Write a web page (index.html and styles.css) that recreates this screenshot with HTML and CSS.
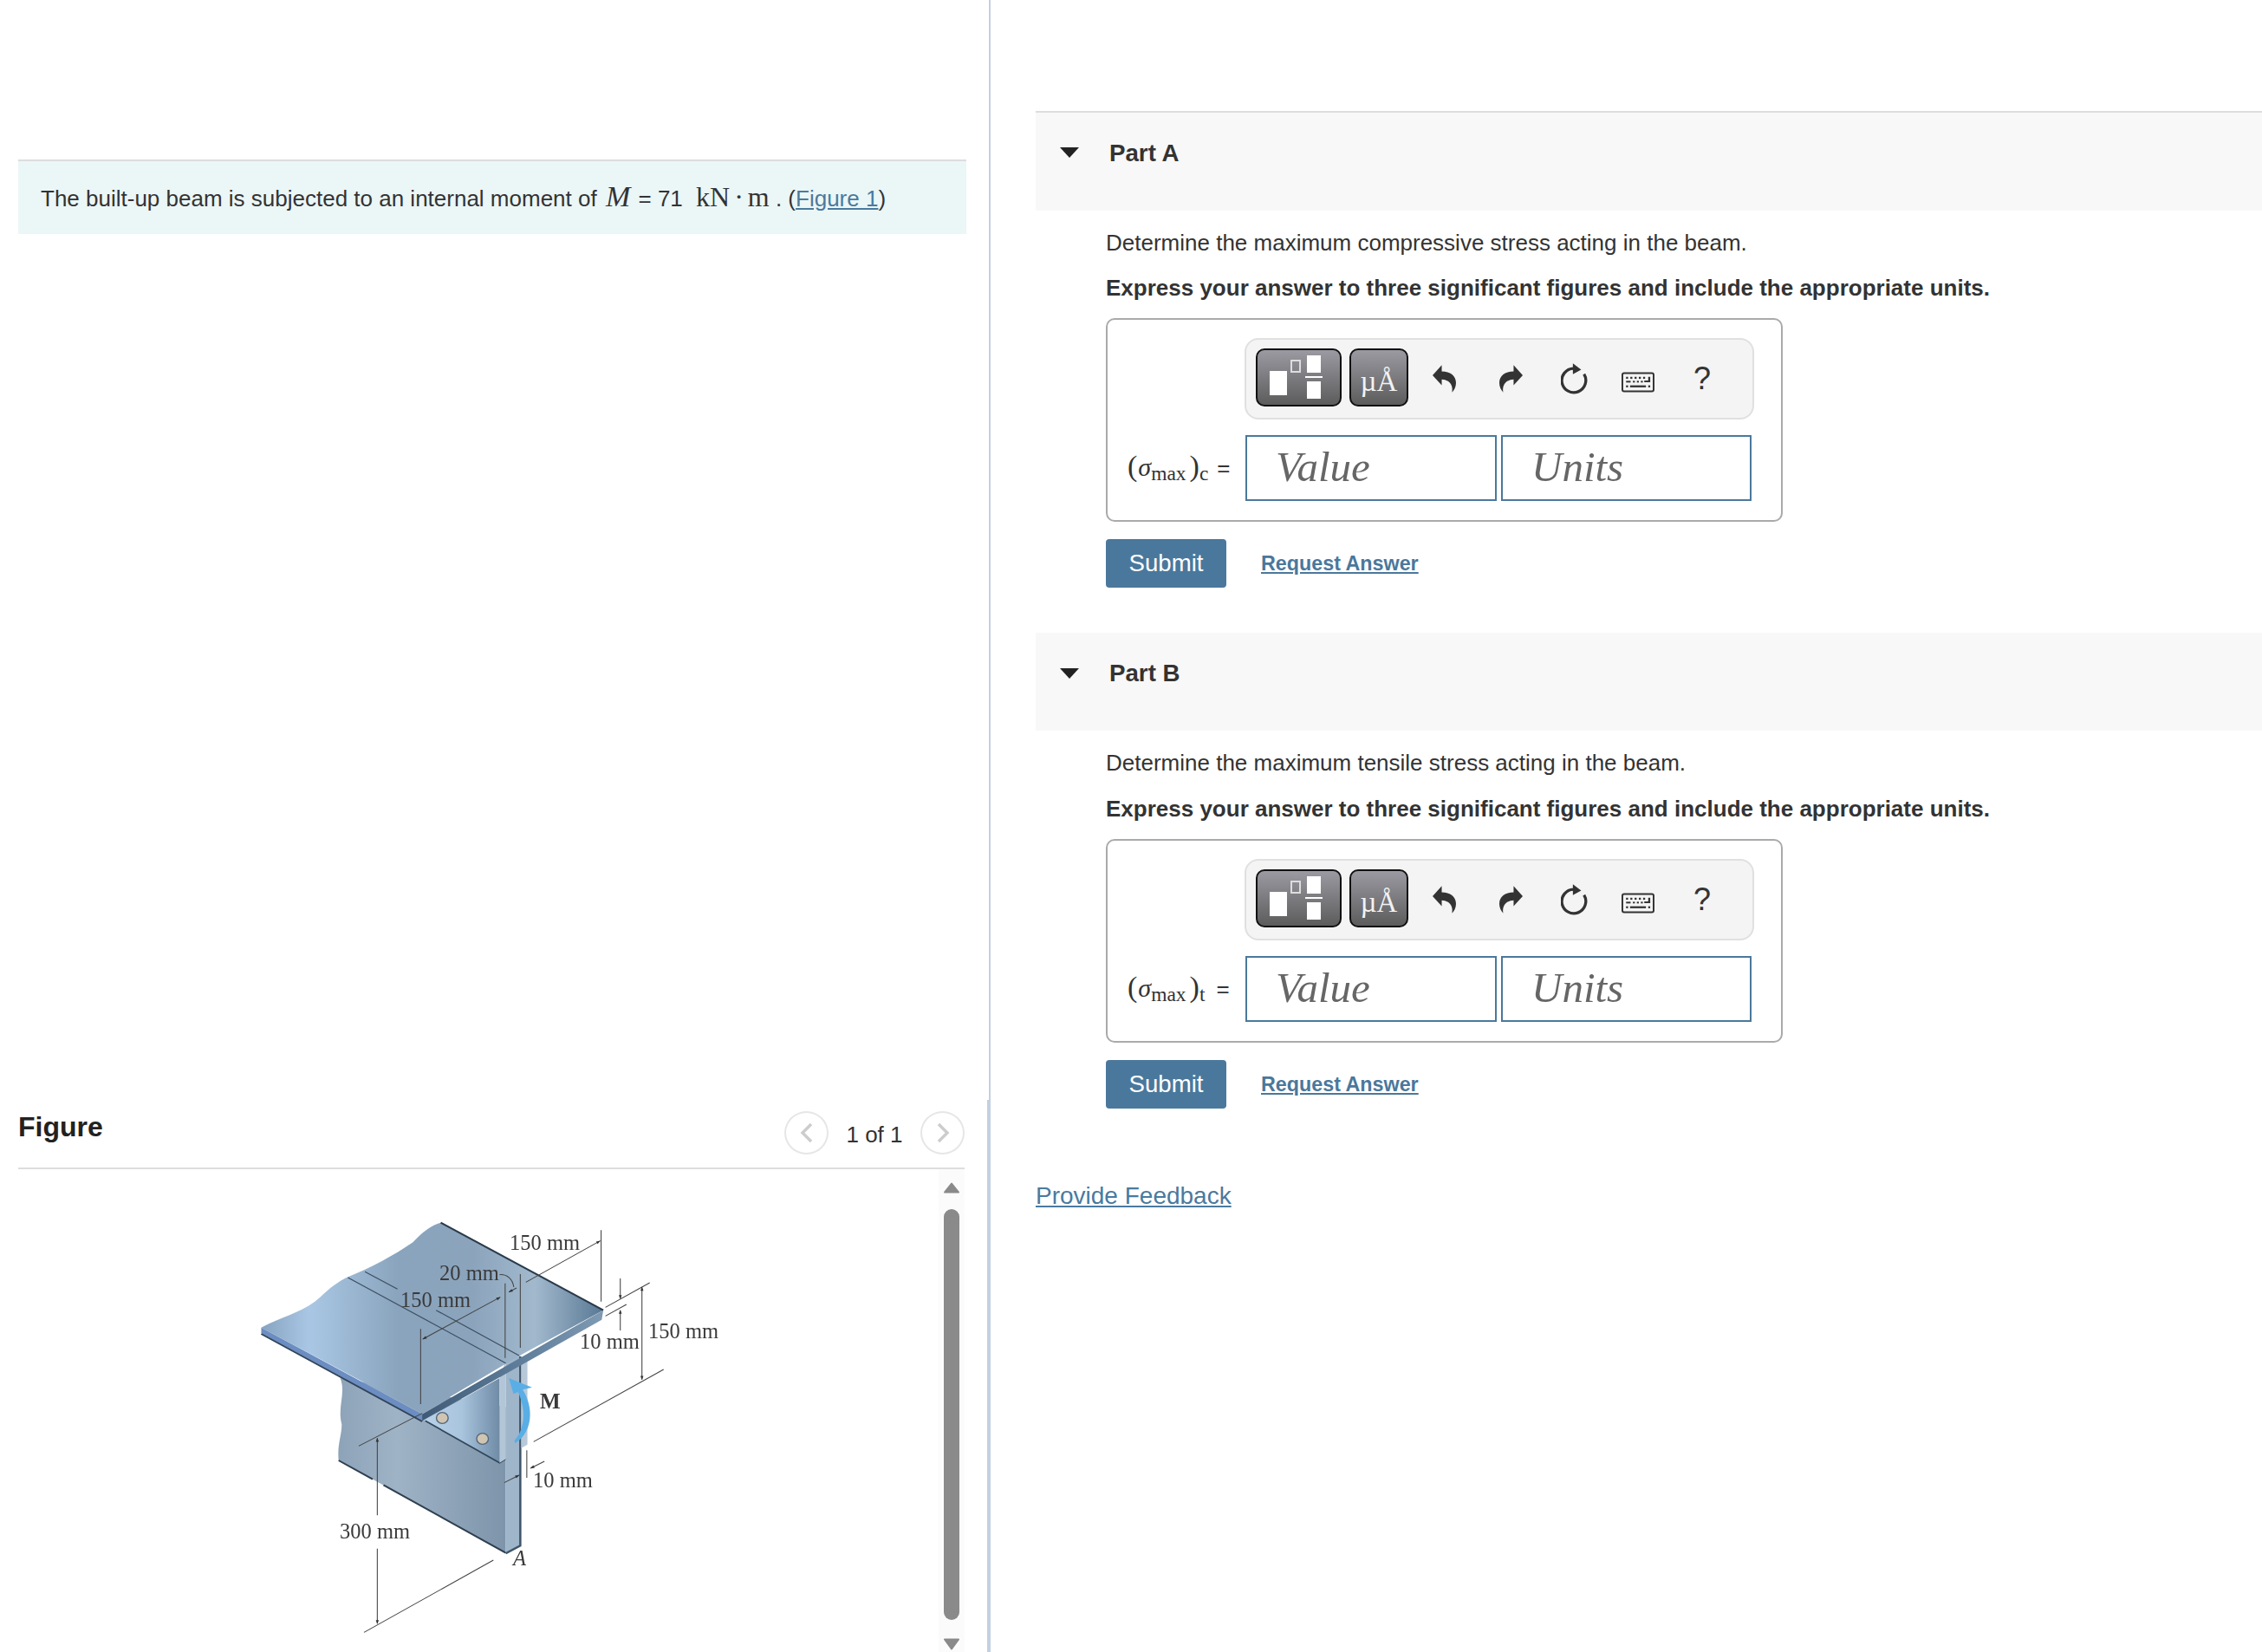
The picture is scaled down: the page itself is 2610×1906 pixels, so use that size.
FILE: index.html
```html
<!DOCTYPE html>
<html lang="en">
<head>
<meta charset="utf-8">
<title>Built-up beam</title>
<link rel="stylesheet" href="styles.css">
</head>
<body>
<svg class="defs" width="0" height="0" aria-hidden="true">
  <defs>
    <g id="i-undo"><path d="M0 35 L32 0 V22 C62 22 82 38 82 62 C82 76 76 88 68 95 C72 78 66 52 32 50 V70 Z"/></g>
    <g id="i-reload">
      <path d="M81 38 A42 42 0 1 1 44 18" fill="none" stroke="#333" stroke-width="10"/>
      <path d="M42 0 L71 22 L42 38 Z"/>
    </g>
    <g id="i-keyboard">
      <rect x="3" y="3" width="110" height="64" rx="6" fill="none" stroke="#333" stroke-width="6"/>
      <rect x="16" y="16" width="7" height="7"/><rect x="31" y="16" width="7" height="7"/><rect x="46" y="16" width="7" height="7"/><rect x="61" y="16" width="7" height="7"/><rect x="76" y="16" width="7" height="7"/><rect x="94" y="16" width="7" height="18"/>
      <rect x="16" y="30" width="16" height="6"/><rect x="40" y="30" width="7" height="6"/><rect x="54" y="30" width="7" height="6"/><rect x="68" y="30" width="7" height="6"/><rect x="80" y="29" width="21" height="6"/>
      <rect x="16" y="46" width="7" height="7"/><rect x="30" y="46" width="56" height="7"/><rect x="94" y="46" width="7" height="7"/>
    </g>
    <g id="i-template">
      <rect x="16" y="26" width="20" height="28" fill="#fff"/>
      <rect x="41" y="14" width="10" height="13" fill="none" stroke="#ddd" stroke-width="2"/>
      <rect x="59" y="8" width="16" height="20" fill="#fff"/>
      <rect x="57" y="32" width="20" height="2" fill="#fff"/>
      <rect x="59" y="38" width="16" height="20" fill="#fff"/>
    </g>
  </defs>
</svg>

<div class="page">
  <section class="left">
    <p class="prompt">The built-up beam is subjected to an internal moment of <i class="mi">M</i> = 71 <span class="mu">kN<span class="dot">·</span>m</span> . (<a class="link" href="#fig">Figure 1</a>)</p>

    <div class="figure" id="fig">
      <header class="fig-head">
        <h2 class="fig-title">Figure</h2>
        <div class="pager">
          <span class="circle"><svg width="16" height="24" viewBox="0 0 16 24"><path d="M13 2 L3 12 L13 22" fill="none" stroke="#ccc" stroke-width="3.4"/></svg></span>
          <span class="count">1 of 1</span>
          <span class="circle"><svg width="16" height="24" viewBox="0 0 16 24"><path d="M3 2 L13 12 L3 22" fill="none" stroke="#ccc" stroke-width="3.4"/></svg></span>
        </div>
      </header>
      <div class="fig-body">
        <div class="fig-view">
          <svg class="beam" width="560" height="516" viewBox="0 0 560 516">
            <defs>
              <linearGradient id="gTop" x1="0" x2="1" y1="0" y2="0">
                <stop offset="0" stop-color="#86a3c0"/><stop offset=".14" stop-color="#a9c7e4"/><stop offset=".4" stop-color="#8aa4bd"/><stop offset=".62" stop-color="#8ba4bc"/><stop offset=".8" stop-color="#a2b9cd"/><stop offset="1" stop-color="#587894"/>
              </linearGradient>
              <linearGradient id="gWeb" x1="0" x2="1" y1="0" y2="0">
                <stop offset="0" stop-color="#8da3b8"/><stop offset=".35" stop-color="#9fb3c6"/><stop offset="1" stop-color="#7d94aa"/>
              </linearGradient>
              <linearGradient id="gPlate" x1="0" x2="1" y1="0" y2="0">
                <stop offset="0" stop-color="#b9d2ea"/><stop offset=".5" stop-color="#a9c4dd"/><stop offset="1" stop-color="#6f8ba6"/>
              </linearGradient>
              <linearGradient id="gEdge" x1="0" x2="1" y1="0" y2="0">
                <stop offset="0" stop-color="#3f5a76"/><stop offset=".5" stop-color="#5c7b98"/><stop offset="1" stop-color="#7f9ab2"/>
              </linearGradient>
              <marker id="ah" viewBox="0 0 10 10" refX="9" refY="5" markerWidth="18" markerHeight="14" orient="auto-start-reverse" markerUnits="userSpaceOnUse"><path d="M0 1.5 L10 5 L0 8.500 Z" fill="#333"/></marker>
            </defs>
            <g transform="scale(.35714 .33333)">
              <path d="M315 600 C335 650 305 700 320 760 C320 800 305 830 310 885 L850 1205 L850 700 Z" fill="url(#gWeb)"/>
              <path d="M310 885 L420 950 M455 970 L850 1205" stroke="#2f3f50" stroke-width="6" fill="none"/>
              <path d="M585 745 L830 600 L830 895 Z" fill="url(#gPlate)"/>
              <path d="M590 748 L830 893 L850 880" stroke="#33475a" stroke-width="5" fill="none"/>
              <path d="M830 600 L850 540 L850 880 L830 893 Z" fill="#b3c6d8"/>
              <path d="M850 540 L897 520 L897 1180 L850 1205 Z" fill="#9fb5ca"/>
              <path d="M897 525 V1180 L850 1207" stroke="#3f5468" stroke-width="7" fill="none"/>
              <path d="M900 530 L920 530 L920 830 L900 842 Z" fill="#b7c9d8"/>
              <circle cx="645" cy="738" r="19" fill="#cfc5b2" stroke="#54687c" stroke-width="4"/>
              <circle cx="775" cy="810" r="19" fill="#cfc5b2" stroke="#54687c" stroke-width="4"/>
              <path d="M60 425 C130 385 200 370 250 320 C280 290 310 265 340 250 C410 220 490 175 550 130 C580 95 610 70 640 62 L1165 365 L890 525 L580 722 Z" fill="url(#gTop)"/>
              <path d="M60 425 L580 725 L580 748 L60 445 Z" fill="#6b8dc2"/>
              <path d="M60 447 L580 750" stroke="#2f4358" stroke-width="6"/>
              <path d="M580 725 L1165 365 L1160 398 L580 748 Z" fill="url(#gEdge)"/>
              <path d="M640 62 L1165 365" stroke="#2a3a4a" stroke-width="6"/>
              <path d="M340 252 L850 548 M395 232 L500 292 M625 365 L893 522" stroke="#3d4f62" stroke-width="3.500" fill="none"/>
              <g stroke="#444" stroke-width="3" fill="none">
                <path d="M1158 88 V335"/>
                <path d="M582 465 L832 320" marker-start="url(#ah)" marker-end="url(#ah)"/>
                <path d="M860 302 L885 288" marker-start="url(#ah)"/>
                <path d="M915 268 L1155 125" marker-end="url(#ah)"/>
                <path d="M575 430 V690"/>
                <path d="M848 272 V530"/>
                <path d="M897 240 V495"/>
                <path d="M830 242 C855 240 872 258 876 285"/>
                <path d="M1172 355 L1315 270 M1172 385 L1240 345"/>
                <path d="M1220 255 V325" marker-end="url(#ah)"/>
                <path d="M1220 435 V365" marker-end="url(#ah)"/>
                <path d="M1290 285 V605" marker-start="url(#ah)" marker-end="url(#ah)"/>
                <path d="M940 820 L1360 570"/>
                <path d="M375 835 L580 722"/>
                <path d="M435 1075 V808" marker-end="url(#ah)"/>
                <path d="M435 1190 V1450" marker-end="url(#ah)"/>
                <path d="M392 1480 L810 1230"/>
                <path d="M918 850 V945"/>
                <path d="M975 888 L930 912" marker-end="url(#ah)"/>
                <path d="M845 962 L893 936" marker-end="url(#ah)"/>
              </g>
              <path d="M880 825 C925 800 950 720 905 640 L935 632 L860 600 L875 655 L890 648 C920 720 905 790 878 815 Z" fill="#5aaee6"/>
            </g>
            <g class="dim">
              <text x="308" y="52">150 mm</text>
              <text x="227" y="87">20 mm</text>
              <text x="182" y="118">150 mm</text>
              <text x="389" y="166">10 mm</text>
              <text x="468" y="154">150 mm</text>
              <text class="dim-m" x="343" y="235">M</text>
              <text x="335" y="326">10 mm</text>
              <text x="112" y="385">300 mm</text>
              <text class="dim-a" x="312" y="416">A</text>
            </g>
          </svg>
        </div>
        <div class="scroll">
          <svg class="arrow" width="18" height="13" viewBox="0 0 18 13"><path d="M9 1.500 L17 11.500 H1 Z" fill="#8a8a8a" stroke="#8a8a8a" stroke-width="2" stroke-linejoin="round"/></svg>
          <div class="thumb"></div>
          <svg class="arrow" width="18" height="14" viewBox="0 0 18 14"><path d="M1 1.500 H17 L9 12.500 Z" fill="#8a8a8a" stroke="#8a8a8a" stroke-width="2" stroke-linejoin="round"/></svg>
        </div>
      </div>
    </div>
  </section>

  <main class="right">
    <section class="part part-first">
      <header class="band"><span class="caret"></span><h3 class="part-title">Part A</h3></header>
      <div class="part-body">
        <p class="desc">Determine the maximum compressive stress acting in the beam.</p>
        <p class="instr">Express your answer to three significant figures and include the appropriate units.</p>
        <div class="answer">
          <div class="toolbar">
            <div class="tb-btn tb-wide"><svg width="95" height="63" viewBox="2 2 95 63"><use href="#i-template"/></svg></div>
            <div class="tb-btn tb-units">µÅ</div>
            <svg class="ic ic-undo" width="27" height="32" viewBox="0 0 82 95"><use href="#i-undo"/></svg>
            <svg class="ic ic-redo" width="27" height="32" viewBox="0 0 82 95"><use href="#i-undo"/></svg>
            <svg class="ic ic-reload" width="32" height="36" viewBox="0 0 97 108"><use href="#i-reload"/></svg>
            <svg class="ic ic-keys" width="38" height="24" viewBox="0 0 116 70"><use href="#i-keyboard"/></svg>
            <span class="ic-help">?</span>
          </div>
          <div class="entry">
            <div class="label"><span class="paren">(</span><i class="sigma">σ</i><span class="sub">max</span><span class="paren paren-close">)</span><span class="sub">c</span><span class="eq">=</span></div>
            <div class="field field-value">Value</div>
            <div class="field field-units">Units</div>
          </div>
        </div>
        <div class="actions"><button class="submit" type="button">Submit</button><a class="request" href="#a">Request Answer</a></div>
      </div>
    </section>

    <section class="part part-second">
      <header class="band"><span class="caret"></span><h3 class="part-title">Part B</h3></header>
      <div class="part-body">
        <p class="desc">Determine the maximum tensile stress acting in the beam.</p>
        <p class="instr">Express your answer to three significant figures and include the appropriate units.</p>
        <div class="answer">
          <div class="toolbar">
            <div class="tb-btn tb-wide"><svg width="95" height="63" viewBox="2 2 95 63"><use href="#i-template"/></svg></div>
            <div class="tb-btn tb-units">µÅ</div>
            <svg class="ic ic-undo" width="27" height="32" viewBox="0 0 82 95"><use href="#i-undo"/></svg>
            <svg class="ic ic-redo" width="27" height="32" viewBox="0 0 82 95"><use href="#i-undo"/></svg>
            <svg class="ic ic-reload" width="32" height="36" viewBox="0 0 97 108"><use href="#i-reload"/></svg>
            <svg class="ic ic-keys" width="38" height="24" viewBox="0 0 116 70"><use href="#i-keyboard"/></svg>
            <span class="ic-help">?</span>
          </div>
          <div class="entry">
            <div class="label"><span class="paren">(</span><i class="sigma">σ</i><span class="sub">max</span><span class="paren paren-close">)</span><span class="sub sub-t">t</span><span class="eq">=</span></div>
            <div class="field field-value">Value</div>
            <div class="field field-units">Units</div>
          </div>
        </div>
        <div class="actions"><button class="submit" type="button">Submit</button><a class="request" href="#b">Request Answer</a></div>
      </div>
    </section>

    <a class="feedback" href="#f">Provide Feedback</a>
  </main>
</div>
</body>
</html>
```

FILE: styles.css
```css
* { box-sizing: border-box; }
html, body { margin: 0; height: 1906px; overflow: hidden; background: #fff; }
body { font-family: "Liberation Sans", Arial, sans-serif; font-size: 26px; color: #333; }
.defs { position: absolute; }
.page { display: flex; height: 1906px; }

.left { width: 1143px; flex: none; border-right: 2px solid #c3d0e0; display: flex; flex-direction: column; }
.prompt { margin: 184px 0 0 21px; width: 1094px; height: 86px; padding: 0 0 0 26px; border-top: 2px solid #ddd; background: #ebf6f7; line-height: 81px; white-space: nowrap; }
.mi { font-family: "Liberation Serif", serif; font-size: 34px; margin: 0 2px 0 3px; }
.mu { font-family: "Liberation Serif", serif; font-size: 32px; margin-left: 8px; }
.dot { margin: 0 5px; }
.link { color: #4a7a9e; text-decoration: underline; }

.figure { margin-top: 999px; flex: 1; border-right: 2px solid #c3d0e0; padding-left: 21px; min-height: 0; }
.fig-head { width: 1092px; height: 80px; border-bottom: 2px solid #ddd; display: flex; justify-content: space-between; align-items: flex-start; }
.fig-title { margin: 12px 0 0; font-size: 32px; line-height: 38px; font-weight: bold; color: #222; }
.pager { display: flex; align-items: center; margin-top: 13px; }
.circle { width: 51px; height: 50px; border: 2px solid #e6e6e6; border-radius: 50%; display: flex; align-items: center; justify-content: center; }
.count { width: 106px; text-align: center; padding-top: 4px; }
.fig-body { width: 1092px; height: 557px; display: flex; }
.fig-view { flex: 1; padding: 41px 0 0 259px; }
.beam { display: block; filter: blur(.5px); }
.dim { font-family: "Liberation Serif", serif; font-size: 24.500px; fill: #3a3a3a; }
.dim-m { font-weight: bold; font-size: 25px; }
.dim-a { font-style: italic; }
.scroll { width: 30px; background: #fbfbfb; display: flex; flex-direction: column; align-items: center; padding: 15px 0 0; }
.arrow { display: block; flex: none; }
.thumb { width: 18px; height: 474px; margin: 18px 0 21px; border-radius: 9px; background: #8a8a8a; flex: none; }

.right { flex: 1; padding: 128px 0 0 52px; min-width: 0; }
.band { height: 115px; border-top: 2px solid #ddd; background: #f8f8f8; display: flex; align-items: flex-start; padding: 31px 0 0 28px; }
.part-second .band { border-top-color: transparent; height: 113px; padding-top: 29px; }
.caret { width: 0; height: 0; margin-top: 9px; border-left: 11px solid transparent; border-right: 11px solid transparent; border-top: 12px solid #222; }
.part-second .caret { margin-top: 10px; }
.part-title { margin: 0 0 0 35px; font-size: 27.700px; line-height: 32px; font-weight: bold; color: #333; }
.part-body { padding-left: 81px; }
.desc { margin: 0; padding-top: 21px; line-height: 32px; white-space: nowrap; }
.instr { margin: 20px 0 19px; font-weight: bold; line-height: 32px; white-space: nowrap; }
.part-second .instr { margin-top: 21px; }

.answer { width: 781px; height: 235px; border: 2px solid #aaa; border-radius: 10px; padding: 21px 0 0; }
.toolbar { margin-left: 158px; width: 588px; height: 94px; border: 2px solid #e0e0e0; border-radius: 16px; background: #f4f4f4; display: flex; align-items: center; padding-left: 11px; }
.tb-btn { height: 67px; border: 2px solid #111; border-radius: 10px; background: linear-gradient(#9b9aa2, #5c5c5c); color: #f2f2f2; flex: none; margin-top: -3px; }
.tb-wide { width: 99px; }
.tb-wide svg { display: block; }
.tb-units { width: 68px; margin-left: 9px; font-family: "Liberation Serif", serif; font-size: 33px; line-height: 68px; text-align: center; padding-top: 2px; }
.ic { flex: none; display: block; fill: #333; }
.ic-undo { margin-left: 28px; }
.ic-redo { margin-left: 50px; transform: scaleX(-1); }
.ic-reload { margin-left: 44px; }
.ic-keys { margin-left: 38px; margin-top: 8px; }
.ic-help { margin-left: 45px; font-size: 36px; line-height: 40px; color: #333; }

.entry { display: flex; margin-top: 18px; }
.label { width: 159px; flex: none; padding-left: 23px; display: flex; align-items: baseline; height: 76px; line-height: 72px; font-family: "Liberation Serif", serif; font-size: 30px; white-space: nowrap; }
.paren { font-size: 34px; }
.paren-close { margin-left: 4px; }
.sigma { margin-left: 1px; }
.sub { font-size: 23.500px; position: relative; top: 5px; }
.sub-t { margin-right: 3px; }
.eq { font-family: "Liberation Sans", sans-serif; font-size: 26px; margin-left: 10px; }
.field { width: 290px; height: 76px; border: 2px solid #4a789c; background: #fff; font-family: "Liberation Serif", serif; font-style: italic; font-size: 49px; line-height: 70px; color: #666; padding-left: 33px; flex: none; }
.field-units { margin-left: 5px; width: 289px; }

.actions { display: flex; align-items: center; margin-top: 20px; }
.submit { width: 139px; height: 56px; border: 0; border-radius: 4px; background: #4a789c; color: #fff; font-family: inherit; font-size: 27.600px; padding: 0; }
.request { margin-left: 40px; color: #4a789c; font-size: 23.300px; font-weight: bold; text-decoration: underline; }
.part-second { margin-top: 52px; }
.feedback { display: inline-block; margin-top: 84px; color: #4a7a9e; font-size: 28px; line-height: 34px; text-decoration: underline; }
```
